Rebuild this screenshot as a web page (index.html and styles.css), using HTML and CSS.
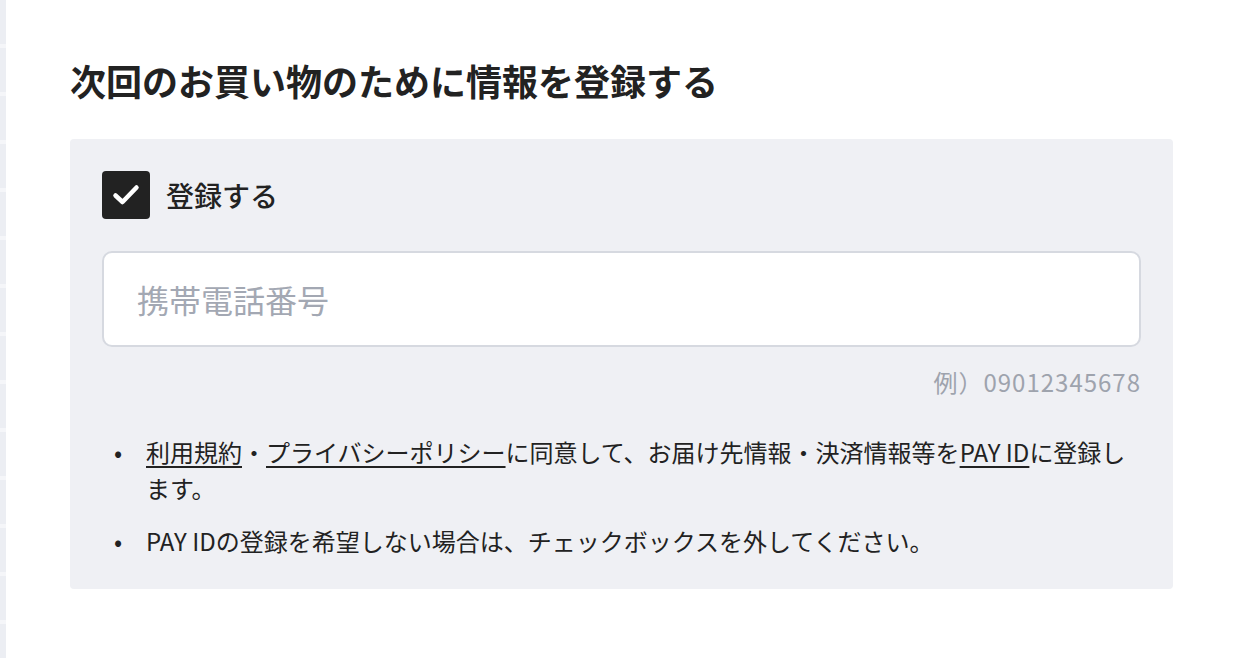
FILE: index.html
```html
<!DOCTYPE html>
<html lang="ja">
<head>
    <meta charset="UTF-8">
    <meta name="viewport" content="width=device-width, initial-scale=1.0">
    <title>次回のお買い物のために情報を登録する</title>
    <link rel="stylesheet" href="styles.css">
</head>
<body>
    <div class="side-strip"></div>
    <main class="main">
        <h2 class="title">次回のお買い物のために情報を登録する</h2>
        <section class="register-box">
            <label class="check-row">
                <span class="checkbox">
                    <svg viewBox="0 0 48 48" class="check-icon">
                        <polyline points="13.5,24.5 20.5,31 34.5,16.5" fill="none" stroke="#ffffff" stroke-width="4.5" stroke-linecap="round" stroke-linejoin="round"/>
                    </svg>
                </span>
                <span class="check-label">登録する</span>
            </label>
            <input type="tel" class="phone-input" placeholder="携帯電話番号">
            <p class="hint">例）09012345678</p>
            <ul class="notes">
                <li><span><a href="#">利用規約</a>・<a href="#">プライバシーポリシー</a>に同意して、お届け先情報・決済情報等を<a href="#">PAY ID</a>に登録します。</span></li>
                <li><span>PAY IDの登録を希望しない場合は、チェックボックスを外してください。</span></li>
            </ul>
        </section>
    </main>
</body>
</html>
```

FILE: styles.css
```css
body {
    margin: 0;
    display: flex;
    min-height: 658px;
    background: #ffffff;
    color: #222222;
    font-family: "Noto Sans CJK JP", "Noto Sans", sans-serif;
}
.side-strip {
    width: 6px;
    flex-shrink: 0;
    background: repeating-linear-gradient(to bottom, #eceef3 0px, #eceef3 44px, #f5f6f9 44px, #f5f6f9 48px);
}
.main {
    flex: 1;
    padding: 55px 61px 0 64px;
}
.title {
    margin: 0 0 34px;
    font-size: 36px;
    line-height: 50px;
    font-weight: 700;
    color: #222222;
}
.register-box {
    background: #eff0f4;
    border-radius: 4px;
    padding: 32px 32px 30px;
}
.check-row {
    display: flex;
    align-items: center;
    gap: 16px;
}
.checkbox {
    width: 48px;
    height: 48px;
    border-radius: 4px;
    background: #222222;
    display: flex;
}
.check-icon {
    width: 48px;
    height: 48px;
}
.check-label {
    font-size: 28px;
    font-weight: 500;
}
.phone-input {
    display: block;
    box-sizing: border-box;
    width: 100%;
    height: 96px;
    margin-top: 32px;
    padding: 0 33px;
    border: 2px solid #d6d9e0;
    border-radius: 10px;
    background: #ffffff;
    font-family: inherit;
    font-size: 32px;
    color: #222222;
    outline: none;
}
.phone-input::placeholder {
    color: #a3a8b3;
}
.hint {
    margin: 17px 0 0;
    text-align: right;
    font-size: 24px;
    line-height: 36px;
    letter-spacing: 1px;
    color: #9ea3ad;
}
.notes {
    list-style: none;
    margin: 34px 0 0;
    padding: 0;
    font-size: 24px;
    line-height: 36px;
}
.notes li {
    display: flex;
    margin-bottom: 17px;
}
.notes li:last-child {
    margin-bottom: 0;
}
.notes li::before {
    content: "•";
    flex-shrink: 0;
    width: 44px;
    padding-left: 12px;
    box-sizing: border-box;
}
.notes a {
    color: #222222;
    text-decoration: underline;
    text-decoration-thickness: 1.5px;
    text-underline-offset: 4px;
}
```
